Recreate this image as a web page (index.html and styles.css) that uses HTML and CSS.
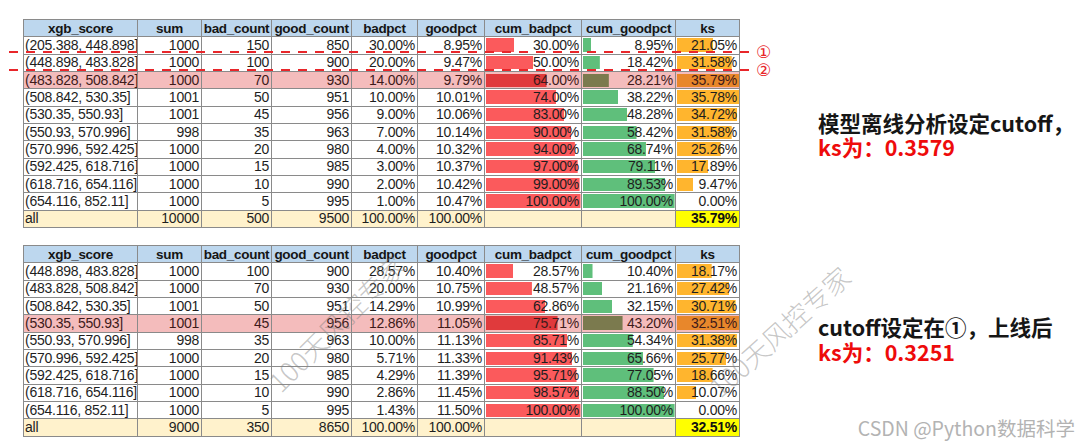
FILE: index.html
```html
<!DOCTYPE html>
<html lang="zh-CN">
<head>
<meta charset="utf-8">
<title>KS cutoff</title>
<link rel="stylesheet" href="styles.css">
</head>
<body>
<div class="page">
  <section class="block block-1">
    <table class="grid">
      <colgroup>
        <col class="c-score"><col class="c-sum"><col class="c-bad"><col class="c-good"><col class="c-bp"><col class="c-gp"><col class="c-cb"><col class="c-cg"><col class="c-ks">
      </colgroup>
      <thead>
        <tr><th>xgb_score</th><th>sum</th><th>bad_count</th><th>good_count</th><th>badpct</th><th>goodpct</th><th>cum_badpct</th><th>cum_goodpct</th><th>ks</th></tr>
      </thead>
      <tbody>
        <tr><td class="lbl">(205.388, 448.898]</td><td>1000</td><td>150</td><td>850</td><td>30.00%</td><td>8.95%</td><td class="bar bar-bad" style="--w:30%">30.00%</td><td class="bar bar-good" style="--w:8.95%">8.95%</td><td class="bar bar-ks" style="--w:58.8%">21.05%</td></tr>
        <tr><td class="lbl">(448.898, 483.828]</td><td>1000</td><td>100</td><td>900</td><td>20.00%</td><td>9.47%</td><td class="bar bar-bad" style="--w:50%">50.00%</td><td class="bar bar-good" style="--w:18.42%">18.42%</td><td class="bar bar-ks" style="--w:88.2%">31.58%</td></tr>
        <tr class="hl"><td class="lbl">(483.828, 508.842]</td><td>1000</td><td>70</td><td>930</td><td>14.00%</td><td>9.79%</td><td class="bar bar-bad" style="--w:64%">64.00%</td><td class="bar bar-good" style="--w:28.21%">28.21%</td><td class="bar bar-ks" style="--w:100%">35.79%</td></tr>
        <tr><td class="lbl">(508.842, 530.35]</td><td>1001</td><td>50</td><td>951</td><td>10.00%</td><td>10.01%</td><td class="bar bar-bad" style="--w:74%">74.00%</td><td class="bar bar-good" style="--w:38.22%">38.22%</td><td class="bar bar-ks" style="--w:99.97%">35.78%</td></tr>
        <tr><td class="lbl">(530.35, 550.93]</td><td>1001</td><td>45</td><td>956</td><td>9.00%</td><td>10.06%</td><td class="bar bar-bad" style="--w:83%">83.00%</td><td class="bar bar-good" style="--w:48.28%">48.28%</td><td class="bar bar-ks" style="--w:97%">34.72%</td></tr>
        <tr><td class="lbl">(550.93, 570.996]</td><td>998</td><td>35</td><td>963</td><td>7.00%</td><td>10.14%</td><td class="bar bar-bad" style="--w:90%">90.00%</td><td class="bar bar-good" style="--w:58.42%">58.42%</td><td class="bar bar-ks" style="--w:88.2%">31.58%</td></tr>
        <tr><td class="lbl">(570.996, 592.425]</td><td>1000</td><td>20</td><td>980</td><td>4.00%</td><td>10.32%</td><td class="bar bar-bad" style="--w:94%">94.00%</td><td class="bar bar-good" style="--w:68.74%">68.74%</td><td class="bar bar-ks" style="--w:70.6%">25.26%</td></tr>
        <tr><td class="lbl">(592.425, 618.716]</td><td>1000</td><td>15</td><td>985</td><td>3.00%</td><td>10.37%</td><td class="bar bar-bad" style="--w:97%">97.00%</td><td class="bar bar-good" style="--w:79.11%">79.11%</td><td class="bar bar-ks" style="--w:50%">17.89%</td></tr>
        <tr><td class="lbl">(618.716, 654.116]</td><td>1000</td><td>10</td><td>990</td><td>2.00%</td><td>10.42%</td><td class="bar bar-bad" style="--w:99%">99.00%</td><td class="bar bar-good" style="--w:89.53%">89.53%</td><td class="bar bar-ks" style="--w:26.5%">9.47%</td></tr>
        <tr><td class="lbl">(654.116, 852.11]</td><td>1000</td><td>5</td><td>995</td><td>1.00%</td><td>10.47%</td><td class="bar bar-bad" style="--w:100%">100.00%</td><td class="bar bar-good" style="--w:100%">100.00%</td><td class="bar bar-ks" style="--w:0%">0.00%</td></tr>
        <tr class="total"><td class="lbl">all</td><td>10000</td><td>500</td><td>9500</td><td>100.00%</td><td>100.00%</td><td></td><td></td><td class="ks-total">35.79%</td></tr>
      </tbody>
    </table>
    <div class="note note-1">
      <p class="note-line">模型离线分析设定cutoff，</p>
      <p class="note-line red">ks为：0.3579</p>
    </div>
  </section>

  <section class="block block-2">
    <table class="grid">
      <colgroup>
        <col class="c-score"><col class="c-sum"><col class="c-bad"><col class="c-good"><col class="c-bp"><col class="c-gp"><col class="c-cb"><col class="c-cg"><col class="c-ks">
      </colgroup>
      <thead>
        <tr><th>xgb_score</th><th>sum</th><th>bad_count</th><th>good_count</th><th>badpct</th><th>goodpct</th><th>cum_badpct</th><th>cum_goodpct</th><th>ks</th></tr>
      </thead>
      <tbody>
        <tr><td class="lbl">(448.898, 483.828]</td><td>1000</td><td>100</td><td>900</td><td>28.57%</td><td>10.40%</td><td class="bar bar-bad" style="--w:28.57%">28.57%</td><td class="bar bar-good" style="--w:10.4%">10.40%</td><td class="bar bar-ks" style="--w:55.9%">18.17%</td></tr>
        <tr><td class="lbl">(483.828, 508.842]</td><td>1000</td><td>70</td><td>930</td><td>20.00%</td><td>10.75%</td><td class="bar bar-bad" style="--w:48.57%">48.57%</td><td class="bar bar-good" style="--w:21.16%">21.16%</td><td class="bar bar-ks" style="--w:84.3%">27.42%</td></tr>
        <tr><td class="lbl">(508.842, 530.35]</td><td>1001</td><td>50</td><td>951</td><td>14.29%</td><td>10.99%</td><td class="bar bar-bad" style="--w:62.86%">62.86%</td><td class="bar bar-good" style="--w:32.15%">32.15%</td><td class="bar bar-ks" style="--w:94.5%">30.71%</td></tr>
        <tr class="hl"><td class="lbl">(530.35, 550.93]</td><td>1001</td><td>45</td><td>956</td><td>12.86%</td><td>11.05%</td><td class="bar bar-bad" style="--w:75.71%">75.71%</td><td class="bar bar-good" style="--w:43.2%">43.20%</td><td class="bar bar-ks" style="--w:100%">32.51%</td></tr>
        <tr><td class="lbl">(550.93, 570.996]</td><td>998</td><td>35</td><td>963</td><td>10.00%</td><td>11.13%</td><td class="bar bar-bad" style="--w:85.71%">85.71%</td><td class="bar bar-good" style="--w:54.34%">54.34%</td><td class="bar bar-ks" style="--w:96.5%">31.38%</td></tr>
        <tr><td class="lbl">(570.996, 592.425]</td><td>1000</td><td>20</td><td>980</td><td>5.71%</td><td>11.33%</td><td class="bar bar-bad" style="--w:91.43%">91.43%</td><td class="bar bar-good" style="--w:65.66%">65.66%</td><td class="bar bar-ks" style="--w:79.3%">25.77%</td></tr>
        <tr><td class="lbl">(592.425, 618.716]</td><td>1000</td><td>15</td><td>985</td><td>4.29%</td><td>11.39%</td><td class="bar bar-bad" style="--w:95.71%">95.71%</td><td class="bar bar-good" style="--w:77.05%">77.05%</td><td class="bar bar-ks" style="--w:57.4%">18.66%</td></tr>
        <tr><td class="lbl">(618.716, 654.116]</td><td>1000</td><td>10</td><td>990</td><td>2.86%</td><td>11.45%</td><td class="bar bar-bad" style="--w:98.57%">98.57%</td><td class="bar bar-good" style="--w:88.5%">88.50%</td><td class="bar bar-ks" style="--w:31%">10.07%</td></tr>
        <tr><td class="lbl">(654.116, 852.11]</td><td>1000</td><td>5</td><td>995</td><td>1.43%</td><td>11.50%</td><td class="bar bar-bad" style="--w:100%">100.00%</td><td class="bar bar-good" style="--w:100%">100.00%</td><td class="bar bar-ks" style="--w:0%">0.00%</td></tr>
        <tr class="total"><td class="lbl">all</td><td>9000</td><td>350</td><td>8650</td><td>100.00%</td><td>100.00%</td><td></td><td></td><td class="ks-total">32.51%</td></tr>
      </tbody>
    </table>
    <div class="note note-2">
      <p class="note-line">cutoff设定在①，上线后</p>
      <p class="note-line red">ks为：0.3251</p>
    </div>
  </section>

  <div class="cut cut-1"><span class="cut-line"></span><span class="cut-mark">①</span></div>
  <div class="cut cut-2"><span class="cut-line"></span><span class="cut-mark">②</span></div>

  <div class="wm wm-1">100天风控专家</div>
  <div class="wm wm-2">100天风控专家</div>
  <div class="credit">CSDN @Python数据科学</div>
</div>
</body>
</html>
```

FILE: styles.css
```css
html, body {
  margin: 0;
  padding: 0;
  background: #ffffff;
}

body {
  font-family: "Liberation Sans", Arial, sans-serif;
  color: #1e1e1e;
}

.page {
  position: relative;
  width: 1080px;
  height: 445px;
  overflow: hidden;
}

.block {
  display: flex;
  align-items: flex-start;
  padding-left: 23px;
}

.block-1 { padding-top: 19px; }
.block-2 { padding-top: 17px; }

.grid {
  border-collapse: collapse;
  table-layout: fixed;
  width: 716px;
  font-size: 14px;
  letter-spacing: -0.25px;
}

.c-score { width: 114px; }
.c-sum { width: 64px; }
.c-bad { width: 70px; }
.c-good { width: 80px; }
.c-bp { width: 66px; }
.c-gp { width: 67px; }
.c-cb { width: 97px; }
.c-cg { width: 94px; }
.c-ks { width: 64px; }

.grid tr {
  height: 17.33px;
}

.grid th,
.grid td {
  border: 1px solid #8a8a8a;
  padding: 0 2px 0 1px;
  line-height: 15px;
  white-space: nowrap;
  overflow: hidden;
  text-align: right;
}

.grid th {
  background: #bdd7ee;
  color: #151515;
  font-weight: bold;
  font-size: 13.5px;
  letter-spacing: -0.3px;
  text-align: center;
  padding: 0;
}

.grid td.lbl {
  text-align: left;
  padding-left: 1px;
}

.bar {
  background-repeat: no-repeat;
  background-position: 1px center;
  background-size: calc(var(--w) * 0.985) calc(100% - 3px);
}

.bar-bad { background-image: linear-gradient(#fb5a5c, #fb5a5c); }
.bar-good { background-image: linear-gradient(#5fbf7b, #5fbf7b); }
.bar-ks { background-image: linear-gradient(#ffb52e, #ffb52e); }

.hl td {
  background-color: #f4bcbc;
  color: #3e1a1a;
}

.hl .bar-bad { background-image: linear-gradient(#e03a3c, #e03a3c); }
.hl .bar-good { background-image: linear-gradient(#7b7a4e, #7b7a4e); }
.hl .bar-ks { background-image: linear-gradient(#e8872b, #e8872b); }

.total td {
  background-color: #fff2cc;
}

.total td.ks-total {
  background-color: #ffff00;
  font-weight: bold;
  color: #111;
}

.note {
  margin-left: 78px;
  font-family: "Noto Sans CJK SC", "Noto Sans", sans-serif;
  font-weight: bold;
  font-size: 21.5px;
  color: #161616;
}

.note-1 { margin-top: 92px; }
.note-2 { margin-top: 69px; }

.note-line {
  margin: 0;
  line-height: 24px;
  white-space: nowrap;
}

.note-2 .note-line {
  line-height: 25px;
}

.note-line.red {
  color: #ee0b0b;
}

.cut {
  position: absolute;
  left: 9px;
  display: flex;
  align-items: center;
  gap: 4px;
}

.cut-1 { top: 44px; }
.cut-2 { top: 62px; }

.cut-line {
  display: block;
  width: 743px;
  height: 2px;
  background: repeating-linear-gradient(to right, #e8262a 0 9px, transparent 9px 17px);
}

.cut-mark {
  font-family: "DejaVu Sans", "Noto Sans CJK SC", sans-serif;
  font-size: 17px;
  line-height: 16px;
  color: #e8262a;
}

.wm {
  position: absolute;
  transform: translate(-50%, -50%) rotate(-45deg);
  font-family: "Noto Sans CJK SC", "Noto Sans", sans-serif;
  font-weight: 300;
  font-size: 27px;
  color: rgba(130, 130, 130, 0.45);
  white-space: nowrap;
}

.wm-1 { left: 336px; top: 323px; }
.wm-2 { left: 779px; top: 331px; transform: translate(-50%, -50%) rotate(-42deg); }

.credit {
  position: absolute;
  right: 5px;
  top: 416px;
  font-family: "Noto Sans CJK SC", "Noto Sans", sans-serif;
  font-size: 19.5px;
  line-height: 24px;
  color: #b3b3b3;
}
```
